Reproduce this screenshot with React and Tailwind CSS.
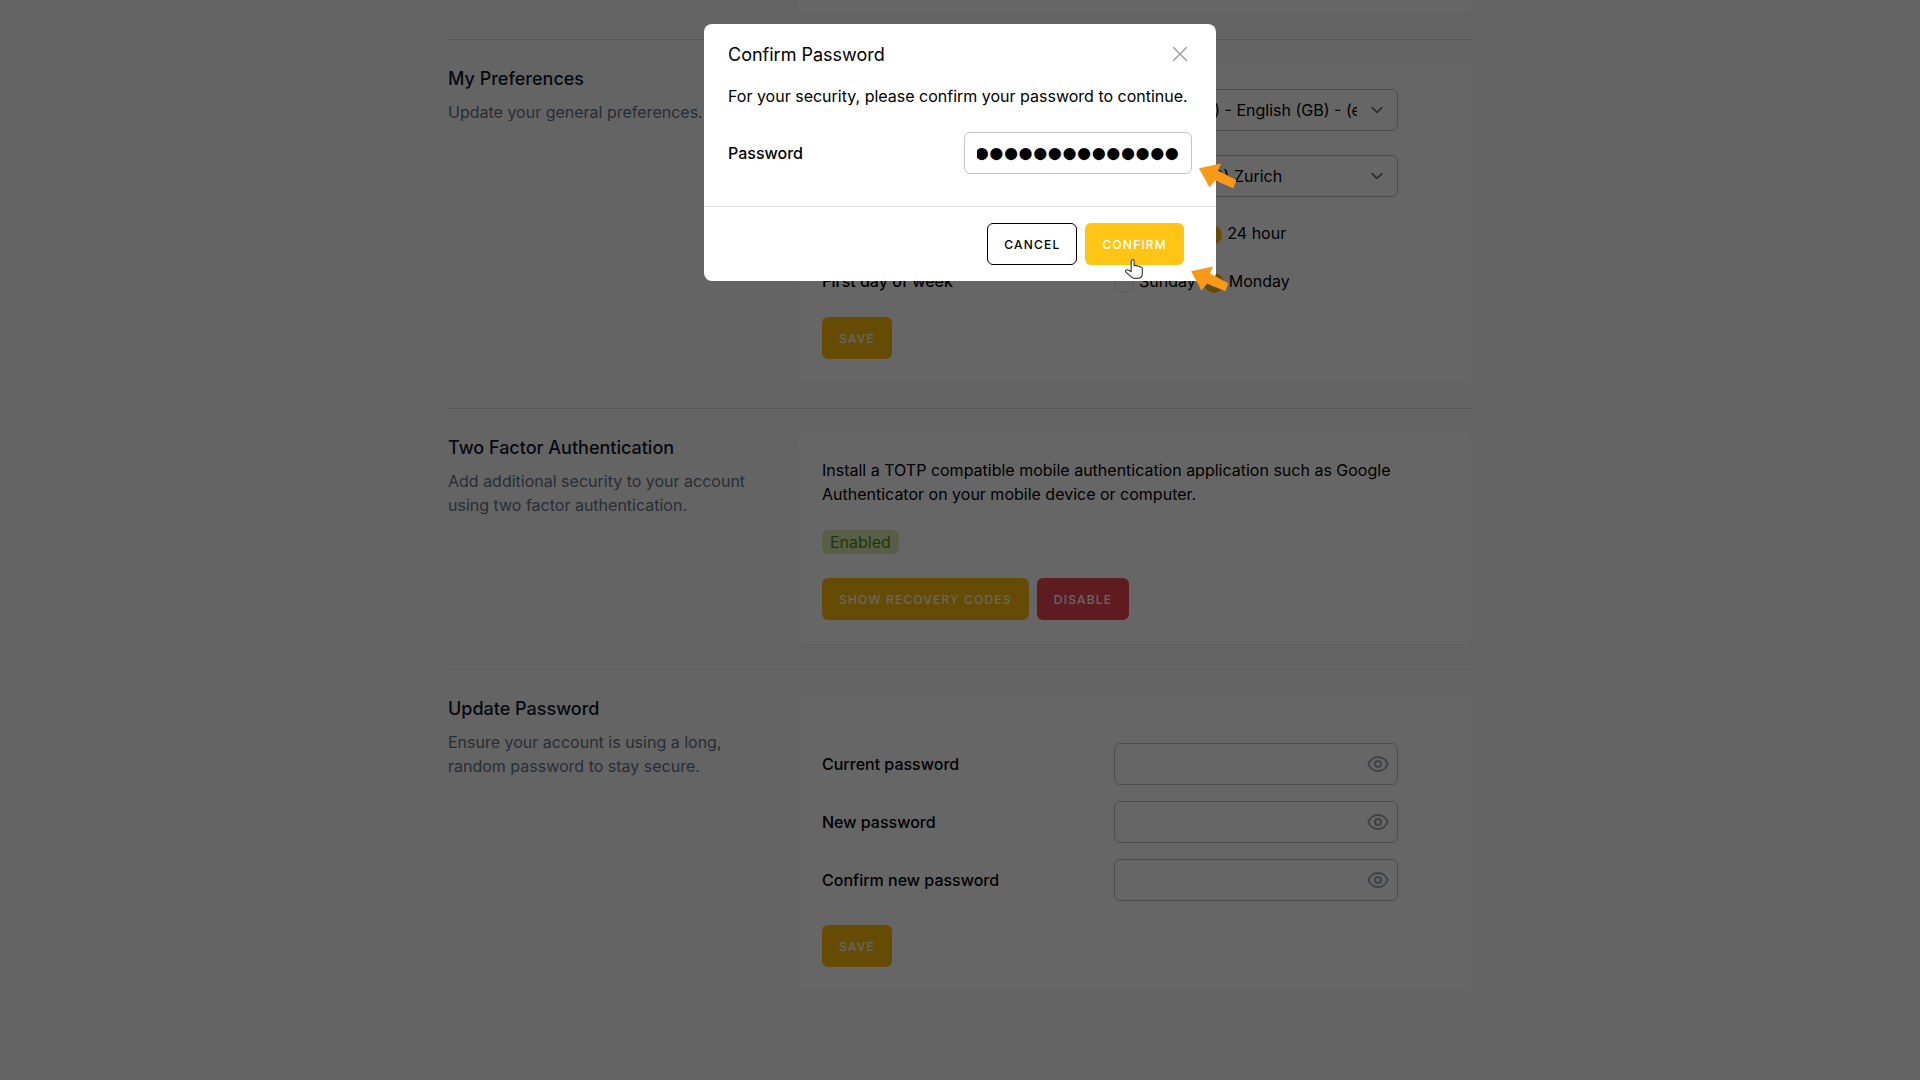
import { useEffect, useRef } from "react";

const inputClass = "block w-full h-[42px] rounded-md border border-[#c4c4c4] bg-white px-3 text-black";

const Button = ({ className, children }) => (
  <button
    type="button"
    className={`inline-flex h-[42px] items-center rounded-md border px-4 pt-0.5 text-xs font-medium uppercase tracking-widest ${className}`}
  >
    {children}
  </button>
);

const SaveButton = () => (
  <div>
    <Button className="border-transparent bg-[#ffbc0c] text-white">Save</Button>
  </div>
);

const Divider = () => (
  <div className="py-[25px]">
    <div className="h-px bg-[#e5e5e5]" />
  </div>
);

const Section = ({ title, description, children }) => (
  <section className="grid grid-cols-3 gap-[26px]">
    <div>
      <h3 className="text-lg leading-7 font-medium text-gray-900">{title}</h3>
      <p className="mt-[7px] text-base text-gray-500">{description}</p>
    </div>
    <div className="col-span-2 rounded-lg bg-white p-6 shadow-[0_1px_2px_rgba(0,0,0,0.03)]">{children}</div>
  </section>
);

const EyeIcon = () => (
  <svg viewBox="0 0 24 24" className="h-6 w-6" fill="none" stroke="currentColor" strokeWidth="2" strokeLinecap="round" strokeLinejoin="round">
    <path d="M15 12a3 3 0 11-6 0 3 3 0 016 0z" />
    <path d="M2.458 12C3.732 7.943 7.523 5 12 5c4.478 0 8.268 2.943 9.542 7-1.274 4.057-5.064 7-9.542 7-4.477 0-8.268-2.943-9.542-7z" />
  </svg>
);

const ArrowMarker = ({ className }) => (
  <svg viewBox="0 0 38 26" className={`absolute h-[26px] w-[38px] ${className}`} fill="#f89a18">
    <path d="M0 5.2 22 0.4 19 7.6 37.4 17.2 34.4 25.2 16 17.4 10.6 24.6Z" />
  </svg>
);

const HandCursor = ({ className }) => (
  <svg viewBox="0 0 18 20" className={`absolute h-5 w-[18px] ${className}`} fill="#fff" stroke="#444" strokeWidth="1.2" strokeLinejoin="round">
    <path d="M6.2 12.6V2.2C6.2.2 9.2.2 9.2 2.2V6.8C10 6 12 6.1 12.3 7.3 13.2 6.7 14.8 7 15.1 8.1 16.1 7.8 17.3 8.3 17.3 9.5V14.6C17.3 17.6 15.6 19.3 12.8 19.3H9.8C8 19.3 7 18.7 6 17.6L1 13.2C-.2 11.9 1.4 10.4 2.9 11Z" />
  </svg>
);

const SelectField = ({ id, label, value }) => (
  <div className="grid grid-cols-2 items-center gap-2">
    <label htmlFor={id} className="font-medium">{label}</label>
    <div className="relative">
      <select id={id} className={`${inputClass} appearance-none pr-10 text-base`}>
        <option>{value}</option>
      </select>
      <svg viewBox="0 0 20 20" className="pointer-events-none absolute top-[9px] right-[9px] h-6 w-6 text-gray-500" fill="none" stroke="currentColor" strokeWidth="1.5" strokeLinecap="round" strokeLinejoin="round">
        <path d="M6 8l4 4 4-4" />
      </svg>
    </div>
  </div>
);

const RadioField = ({ name, label, options, selected }) => (
  <fieldset className="grid grid-cols-2 items-center gap-2">
    <legend className="contents">
      <span className="font-medium">{label}</span>
    </legend>
    <div className="flex gap-2">
      {options.map((option) => (
        <label key={option} className="flex items-center gap-[5px]">
          <input
            type="radio"
            name={name}
            defaultChecked={option === selected}
            className="mt-1 h-5 w-5 appearance-none rounded-full border border-[#e5e5e5] bg-white checked:border-[6px] checked:border-[#ffbc0c]"
          />
          {option}
        </label>
      ))}
    </div>
  </fieldset>
);

const PasswordField = ({ id, label }) => (
  <div className="grid grid-cols-2 items-center gap-2">
    <label htmlFor={id} className="font-medium">{label}</label>
    <div className="relative">
      <input id={id} type="password" className={`${inputClass} pr-10 text-base`} />
      <button type="button" aria-label="Show password" className="absolute top-[9px] right-2 text-[#9ca3af]">
        <EyeIcon />
      </button>
    </div>
  </div>
);

const ConfirmPasswordModal = () => {
  const passwordRef = useRef(null);

  // keep the end of a long password in view
  useEffect(() => {
    passwordRef.current.scrollLeft = passwordRef.current.scrollWidth;
  }, []);

  return (
    <div className="fixed inset-0 bg-black/60 px-4 py-6">
      <div role="dialog" aria-labelledby="confirm-title" className="mx-auto max-w-lg rounded-lg bg-white">
        <div className="px-6 pt-4 pb-8">
          <div className="flex h-7 items-center justify-between">
            <h2 id="confirm-title" className="pt-0.5 text-lg leading-7">Confirm Password</h2>
            <button type="button" aria-label="Close" className="text-gray-400">
              <svg viewBox="0 0 24 24" className="h-6 w-6" fill="none" stroke="currentColor" strokeWidth="1.5" strokeLinecap="round">
                <path d="M5.5 5.5l13 13M18.5 5.5l-13 13" />
              </svg>
            </button>
          </div>
          <p className="mt-4">For your security, please confirm your password to continue.</p>
          <div className="mt-6 grid grid-cols-2 items-center gap-2">
            <label htmlFor="confirm-password" className="font-medium">Password</label>
            <div className="relative">
              <input
                ref={passwordRef}
                id="confirm-password"
                type="password"
                defaultValue="correct-horse-battery"
                className={`${inputClass} pb-0.5 text-[26px] [-webkit-text-stroke:4px_black]`}
              />
              <ArrowMarker className="top-[31px] left-[235px]" />
            </div>
          </div>
        </div>
        <div className="flex justify-end gap-2 border-t border-[#e2e2e2] px-8 py-4">
          <Button className="border-black bg-white text-black">Cancel</Button>
          <div className="relative">
            <Button className="border-transparent bg-[#ffc414] text-white">Confirm</Button>
            <HandCursor className="top-9 left-10" />
            <ArrowMarker className="top-[43px] right-[-45px]" />
          </div>
        </div>
      </div>
    </div>
  );
};

const App = () => {
  return (
    <div className="min-h-screen bg-[#fafafa] text-base text-black" style={{ fontFamily: "Inter, sans-serif" }}>
      <main className="mx-auto max-w-5xl">
        <div className="grid grid-cols-3 gap-[26px]">
          <div className="col-span-2 col-start-2 h-3.5 rounded-b-lg bg-white shadow-[0_1px_2px_rgba(0,0,0,0.03)]" />
        </div>

        <Divider />

        <Section title="My Preferences" description="Update your general preferences.">
          <div className="max-w-xl space-y-6">
            <SelectField id="language" label="Language" value="English (GB) - English (GB) - (en_GB)" />
            <SelectField id="timezone" label="Timezone" value="(GMT+02:00) Zurich" />
            <RadioField name="time" label="Time format" options={["12 hour", "24 hour"]} selected="24 hour" />
            <RadioField name="week" label="First day of week" options={["Sunday", "Monday"]} selected="Monday" />
            <SaveButton />
          </div>
        </Section>

        <Divider />

        <Section
          title="Two Factor Authentication"
          description="Add additional security to your account using two factor authentication."
        >
          <div className="space-y-6">
            <p>
              Install a TOTP compatible mobile authentication application such as Google Authenticator on your mobile
              device or computer.
            </p>
            <div className="flex">
              <span className="rounded-md bg-[#dcebb2] px-2 text-[#558a14]">Enabled</span>
            </div>
            <div className="flex gap-2">
              <Button className="border-transparent bg-[#ffbc0c] text-white">Show recovery codes</Button>
              <Button className="border-transparent bg-[#eb4650] text-white">Disable</Button>
            </div>
          </div>
        </Section>

        <Divider />

        <Section title="Update Password" description="Ensure your account is using a long, random password to stay secure.">
          <div className="max-w-xl pt-6">
            <div className="mb-6 space-y-4">
              <PasswordField id="current-password" label="Current password" />
              <PasswordField id="new-password" label="New password" />
              <PasswordField id="new-password-again" label="Confirm new password" />
            </div>
            <SaveButton />
          </div>
        </Section>
      </main>

      <ConfirmPasswordModal />
    </div>
  );
};

export default App;
